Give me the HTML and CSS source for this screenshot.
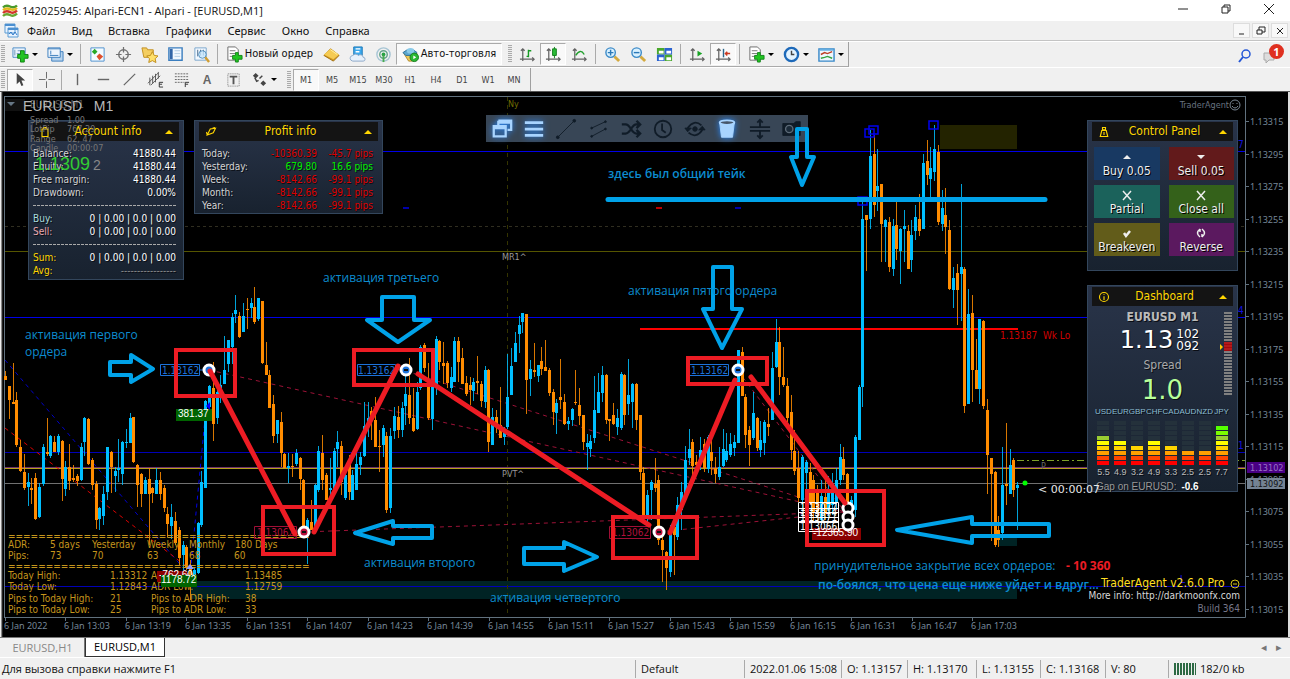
FILE: index.html
```html
<!DOCTYPE html>
<html lang="ru">
<head>
<meta charset="utf-8">
<title>142025945: Alpari-ECN1 - Alpari - [EURUSD,M1]</title>
<link rel="stylesheet" href="styles.css">
</head>
<body>
<svg class="defs" aria-hidden="true">
  <defs>
    <symbol id="logo" viewBox="0 0 16 16"><g fill="none" stroke-width="2.4"><path d="M1 4.500Q4 1.500 8 3.500T15 2.500" stroke="#4a9b2c"/><path d="M1 7.200Q4 4.500 8 6.200T15 5" stroke="#e3b91e"/><path d="M1 10Q4 7 8 9T15 7.500" stroke="#d3372a"/><path d="M1 13Q4 10 8 12T15 10.500" stroke="#69a832"/></g></symbol>
    <symbol id="mdi" viewBox="0 0 16 16"><path d="M2 1h10v9H2zM5 5h10v9H5z" fill="#e8f3ff" stroke="#5b9bd3"/><path d="M2 2h10M5 6h10" stroke="#4b8fd0" stroke-width="2"/><path d="M6 11l2-2 2 3 2-3 2 3" fill="none" stroke="#357cc8"/></symbol>
    <symbol id="newchart" viewBox="0 0 18 18"><path d="M1 2h13v10H1z" fill="#eaf3fc" stroke="#4d8cc8"/><path d="M3 4v6M5 8h6M6 5h5" stroke="#6a96b8"/><path d="M9 9V5h4v4h4v4h-4v4H9v-4H6V9z" fill="#22c422" stroke="#118311"/></symbol>
    <symbol id="profiles" viewBox="0 0 18 18"><path d="M5 6h12v10H5z" fill="#b8d4ee" stroke="#3c7dbd"/><path d="M1 2h13v10H1z" fill="#edf5fd" stroke="#3c7dbd"/><path d="M1 3h13M3 10h9M4 5v4" stroke="#3c7dbd"/></symbol>
    <symbol id="market" viewBox="0 0 18 18"><path d="M2 2h14v14H2z" fill="#f5fbff" stroke="#4d90cf"/><path d="M6 3l3 3-3 3-3-3z" fill="#28a828"/><path d="M11 8l4 3-4 4-3-4z" fill="#df502d"/></symbol>
    <symbol id="target" viewBox="0 0 18 18"><circle cx="9" cy="9" r="5" fill="none" stroke="#707070" stroke-width="1.500"/><path d="M9 1v6M9 11v6M1 9h6M11 9h6" stroke="#707070" stroke-width="1.300"/></symbol>
    <symbol id="folder" viewBox="0 0 18 18"><path d="M1 2h5l1 2h6v8H3z" fill="#f4ce61" stroke="#c18e20"/><path d="M12 6l2 4 4 .5-3 3 .8 4-3.800-2-3.800 2 .8-4-3-3 4-.5z" fill="#ffe06a" stroke="#be8c1d"/></symbol>
    <symbol id="terminal" viewBox="0 0 18 18"><path d="M2 2h14v13H2z" fill="#f2f8ff" stroke="#3b7ebf" stroke-width="1.500"/><path d="M3 3h3v11H3z" fill="#3366a8"/><path d="M8 5h6M8 8h6M8 11h6" stroke="#b2cde6"/></symbol>
    <symbol id="tester" viewBox="0 0 18 18"><path d="M2 2h12v13H2z" fill="#f2f8ff" stroke="#7aa6cc"/><path d="M5 4v7M8 4v6M11 4v6" stroke="#468"/><circle cx="10" cy="9" r="4" fill="#c5e6fc" fill-opacity=".8" stroke="#5590be"/><path d="M13 12l4 5" stroke="#d09d32" stroke-width="2.500"/></symbol>
    <symbol id="order" viewBox="0 0 18 18"><path d="M2 1h8l3 3v11H2z" fill="#fff" stroke="#6b6b6b"/><path d="M4 5h6M4 8h6M4 11h4" stroke="#777"/><path d="M10 10V7h3v3h4v4h-4v3h-3v-3H7v-4z" fill="#20c520" stroke="#14851b"/></symbol>
    <symbol id="gold" viewBox="0 0 18 18"><path d="M1 10l7-7 9 7-6 6z" fill="#d49a20" stroke="#a06d0c"/><path d="M1 9l7-6 9 6-6 5z" fill="#f5cb53"/><path d="M8 4l7 5" stroke="#fff0a4"/></symbol>
    <symbol id="cloud" viewBox="0 0 18 18"><path d="M5 1h9v9H5z" fill="#3ca8ec" stroke="#1877b8"/><path d="M7 3h5M7 6h4" stroke="#fff" stroke-width="1.500"/><path d="M2 15a3 3 0 0 1 2-5 4 4 0 0 1 6 0 3 3 0 0 1 5 2 2 2 0 0 1 0 4H4z" fill="#e6f0fb" stroke="#8ba8c8"/></symbol>
    <symbol id="signal" viewBox="0 0 18 18"><g fill="none"><circle cx="9" cy="9" r="7" stroke="#a7c5d4" stroke-width="1.500"/><circle cx="9" cy="9" r="4" stroke="#64a48b" stroke-width="1.500"/></g><circle cx="9" cy="9" r="2" fill="#27a342"/><path d="M9 10v7" stroke="#4aab52" stroke-width="2"/></symbol>
    <symbol id="auto" viewBox="0 0 18 18"><path d="M2 8h14l-5 8H7z" fill="#edc75a" stroke="#b08a28"/><path d="M1 7q8-7 15 0l-3 3H4z" fill="#5ba6cf" stroke="#2d7199"/><ellipse cx="9" cy="5" rx="4" ry="3" fill="#8acae8"/><circle cx="13" cy="12" r="4.500" fill="#2bb832" stroke="#177b1c"/><path d="M12 10l3 2-3 2z" fill="#fff"/></symbol>
    <symbol id="axis" viewBox="0 0 18 18"><path d="M4 3v13M1 14h15M2 5l2-2 2 2M14 12l2 2-2 2" fill="none" stroke="#626262" stroke-width="1.300"/></symbol>
    <symbol id="bars" viewBox="0 0 18 18"><use href="#axis"/><path d="M10 4v8M10 5h3M8 11h2" stroke="#169a23" stroke-width="1.500"/></symbol>
    <symbol id="candles" viewBox="0 0 18 18"><use href="#axis"/><path d="M10 1v12" stroke="#13801d"/><path d="M8 3h4v7H8z" fill="#2abc36" stroke="#13801d"/></symbol>
    <symbol id="line" viewBox="0 0 18 18"><use href="#axis"/><path d="M5 10q5-8 9-1" fill="none" stroke="#20a02d" stroke-width="1.500"/></symbol>
    <symbol id="scroll" viewBox="0 0 18 18"><use href="#axis"/><path d="M9 5l5 3-5 3z" fill="#17a323"/></symbol>
    <symbol id="shift" viewBox="0 0 18 18"><use href="#axis"/><path d="M9 3v9" stroke="#2b668b" stroke-width="1.500"/><path d="M11 8h5M13 6l-2 2 2 2" fill="none" stroke="#cc3a20" stroke-width="1.500"/></symbol>
    <symbol id="zoomin" viewBox="0 0 18 18"><path d="M11 11l5 5" stroke="#d4aa3f" stroke-width="3"/><circle cx="7" cy="7" r="5" fill="#d9f1ff" stroke="#3d8bc8" stroke-width="1.500"/><path d="M4 7h6M7 4v6" stroke="#2b78b8" stroke-width="1.500"/></symbol>
    <symbol id="zoomout" viewBox="0 0 18 18"><path d="M11 11l5 5" stroke="#d4aa3f" stroke-width="3"/><circle cx="7" cy="7" r="5" fill="#d9f1ff" stroke="#3d8bc8" stroke-width="1.500"/><path d="M4 7h6" stroke="#2b78b8" stroke-width="1.500"/></symbol>
    <symbol id="tile" viewBox="0 0 18 18"><path d="M1 2h8v7H1z M9 9h8v7H9z" fill="#49a82b"/><path d="M9 2h8v7H9z M1 9h8v7H1z" fill="#2b63d0"/><path d="M3 5h5v3H3z M11 5h5v3h-5z M3 12h5v3H3z M11 12h5v3h-5z" fill="#fff"/></symbol>
    <symbol id="clock" viewBox="0 0 18 18"><circle cx="9" cy="9" r="7" fill="#e3f3ff" stroke="#1d69b9" stroke-width="2.500"/><path d="M9 5v4h3" fill="none" stroke="#444" stroke-width="1.500"/></symbol>
    <symbol id="template" viewBox="0 0 18 18"><path d="M1 3h16v13H1z" fill="#eef7fe" stroke="#3888c8" stroke-width="1.500"/><path d="M2 4h14" stroke="#65aee2" stroke-width="2"/><path d="M3 9l4-2 3 1 5-2" fill="none" stroke="#bd4026" stroke-width="1.500"/><path d="M3 13l4-1 3-1 5 2" fill="none" stroke="#35a440" stroke-width="1.500"/></symbol>
    <symbol id="cursor" viewBox="0 0 18 18"><path d="M5 2v12l3-3 2 5 2-1-2-5h4z" fill="#444"/></symbol>
    <symbol id="cross" viewBox="0 0 18 18"><path d="M9 1v7M9 11v7M1 9h7M11 9h7" stroke="#666"/></symbol>
    <symbol id="vline" viewBox="0 0 18 18"><path d="M9 3v12" stroke="#666" stroke-width="1.500"/></symbol>
    <symbol id="hline" viewBox="0 0 18 18"><path d="M3 9h12" stroke="#666" stroke-width="1.500"/></symbol>
    <symbol id="trend" viewBox="0 0 18 18"><path d="M3 15L15 3" stroke="#666" stroke-width="1.300"/></symbol>
    <symbol id="channel" viewBox="0 0 18 18"><path d="M1 13L12 2M4 15L14 5M3 7v8M6 5v8M9 3v9M12 1v7" stroke="#555" fill="none"/><path d="M17 12h-4v5h4M13 14h3" stroke="#333" fill="none"/></symbol>
    <symbol id="fibo" viewBox="0 0 18 18"><path d="M2 3h14M2 6h14M2 9h14M2 12h10" stroke="#666" stroke-dasharray="2 1"/><path d="M17 12h-4v5M13 14h3" stroke="#333" fill="none"/></symbol>
    <symbol id="label" viewBox="0 0 18 18"><path d="M3 3h12v13H3z" fill="none" stroke="#777" stroke-dasharray="1 1"/><path d="M5 6h8M9 6v8" stroke="#555" stroke-width="2"/></symbol>
    <symbol id="arrows" viewBox="0 0 18 18"><path d="M5 2l3 3-3 3-3-3zM13 10l3 3-3 3-3-3z" fill="#444"/><path d="M4 7l2 4 2-1M9 8l3-3" stroke="#444" stroke-width="1.500" fill="none"/></symbol>
  </defs>
</svg>

<div class="app">
  <header class="titlebar">
    <svg class="ico16"><use href="#logo"/></svg>
    <h1 class="caption">142025945: Alpari-ECN1 - Alpari - [EURUSD,M1]</h1>
    <div class="winbtns">
      <button aria-label="Свернуть"><svg viewBox="0 0 12 12"><path d="M1 6h10"/></svg></button>
      <button aria-label="Развернуть"><svg viewBox="0 0 12 12"><path d="M2 4h6v6H2zM4 4V2h6v6H8"/></svg></button>
      <button aria-label="Закрыть"><svg viewBox="0 0 12 12"><path d="M1 1l10 10M11 1L1 11"/></svg></button>
    </div>
  </header>
  <nav class="menubar">
    <svg class="ico16"><use href="#mdi"/></svg>
    <button>Файл</button><button>Вид</button><button>Вставка</button><button>Графики</button><button>Сервис</button><button>Окно</button><button>Справка</button>
    <div class="mdibtns">
      <button aria-label="Свернуть окно"><svg viewBox="0 0 12 12"><path d="M3 9h5"/></svg></button>
      <button aria-label="Восстановить окно"><svg viewBox="0 0 12 12"><path d="M2 5h5v4H2zM4 5V2h6v5H7"/></svg></button>
      <button aria-label="Закрыть окно"><svg viewBox="0 0 12 12"><path d="M3 3l6 6M9 3L3 9"/></svg></button>
    </div>
  </nav>

  <div class="toolrow">
    <div class="toolbar main">
      <i class="grip"></i>
      <button class="drop" aria-label="Новый график"><svg><use href="#newchart"/></svg></button>
      <button class="drop" aria-label="Профили"><svg><use href="#profiles"/></svg></button><i class="sep"></i>
      <button aria-label="Обзор рынка"><svg><use href="#market"/></svg></button>
      <button aria-label="Окно данных"><svg><use href="#target"/></svg></button>
      <button aria-label="Навигатор"><svg><use href="#folder"/></svg></button>
      <button aria-label="Терминал"><svg><use href="#terminal"/></svg></button>
      <button aria-label="Тестер"><svg><use href="#tester"/></svg></button><i class="sep"></i>
      <button class="neworder"><svg><use href="#order"/></svg>Новый ордер</button>
      <button aria-label="Маркет"><svg><use href="#gold"/></svg></button>
      <button aria-label="Облако"><svg><use href="#cloud"/></svg></button>
      <button aria-label="Сигналы"><svg><use href="#signal"/></svg></button>
      <button class="autotrade pressed"><svg><use href="#auto"/></svg>Авто-торговля</button>
      <i class="grip second"></i>
      <button aria-label="Бары"><svg><use href="#bars"/></svg></button>
      <button class="pressed" aria-label="Свечи"><svg><use href="#candles"/></svg></button>
      <button aria-label="Линия"><svg><use href="#line"/></svg></button><i class="sep"></i>
      <button aria-label="Увеличить"><svg><use href="#zoomin"/></svg></button>
      <button aria-label="Уменьшить"><svg><use href="#zoomout"/></svg></button>
      <button aria-label="Окна мозаикой"><svg><use href="#tile"/></svg></button><i class="sep"></i>
      <button aria-label="Автопрокрутка"><svg><use href="#scroll"/></svg></button>
      <button class="pressed" aria-label="Сдвиг графика"><svg><use href="#shift"/></svg></button><i class="sep"></i>
      <button class="drop" aria-label="Индикаторы"><svg><use href="#order"/></svg></button>
      <button class="drop" aria-label="Периоды"><svg><use href="#clock"/></svg></button>
      <button class="drop" aria-label="Шаблоны"><svg><use href="#template"/></svg></button>
    </div>
    <div class="toolright">
      <button aria-label="Поиск"><svg viewBox="0 0 16 16"><circle cx="9" cy="6" r="4" fill="none" stroke="#2456d6" stroke-width="1.500"/><path d="M6 9l-4 5" stroke="#2456d6" stroke-width="2"/></svg></button>
      <button class="bell" aria-label="Сообщения"><svg viewBox="0 0 16 16"><path d="M2 5h10v7H7l-3 3v-3H2z" fill="#ddd" stroke="#aaa"/></svg><span class="badge">1</span></button>
    </div>
  </div>
  <div class="toolrow low">
    <div class="toolbar">
      <i class="grip"></i>
      <button class="pressed" aria-label="Курсор"><svg><use href="#cursor"/></svg></button>
      <button aria-label="Перекрестие"><svg><use href="#cross"/></svg></button><i class="sep"></i>
      <button aria-label="Вертикальная линия"><svg><use href="#vline"/></svg></button>
      <button aria-label="Горизонтальная линия"><svg><use href="#hline"/></svg></button>
      <button aria-label="Трендовая линия"><svg><use href="#trend"/></svg></button>
      <button aria-label="Канал"><svg><use href="#channel"/></svg></button>
      <button aria-label="Фибоначчи"><svg><use href="#fibo"/></svg></button>
      <button class="letter">A</button>
      <button aria-label="Метка"><svg><use href="#label"/></svg></button>
      <button class="drop" aria-label="Стрелки"><svg><use href="#arrows"/></svg></button>
      <i class="grip second"></i>
      <button class="pressed tf">M1</button><button class="tf">M5</button><button class="tf">M15</button><button class="tf">M30</button><button class="tf">H1</button><button class="tf">H4</button><button class="tf">D1</button><button class="tf">W1</button><button class="tf">MN</button>
    </div>
  </div>

  <main class="chart">
    <svg class="plot" viewBox="0 92 1290 545" preserveAspectRatio="xMinYMin meet">
      <path class="frame" d="M4 96.500H1246M4.500 96V617.500M4 617.500H1245.500V96"/>
      <path d="M940 125h77v24h-77z" fill="#232300"/>
      <path d="M190 581h827v18H190zM998 537h19v9h-19z" fill="#002324"/>
      <g class="levels">
        <path d="M5 151.500H1245M5 317.500H1245" stroke="#0000e8"/>
        <path d="M5 452.500H1245M5 586.500H1245" stroke="#0000b8"/>
        <path d="M5 226.500H1245" stroke="#302e20" stroke-dasharray="3 3"/>
        <path d="M507.500 97V617" stroke="#343400" stroke-dasharray="4 4"/>
        <path d="M5 251.500H1245" stroke="#555500"/>
        <path d="M640 329H1018" stroke="#ff0000" stroke-width="2"/>
        <path d="M5 467.500H1245" stroke="#70306c"/>
        <path d="M5 468.500H1245" stroke="#b5a21c"/>
        <path d="M5 483.500H1245" stroke="#707070"/>
        <path d="M1017 460.500H1245" stroke="#80a028" stroke-dasharray="7 3 2 3"/>
        <path d="M5 360L190 576" stroke="#0000c8" stroke-dasharray="4 4"/>
        <path d="M5 428L190 569" stroke="#dc0000" stroke-dasharray="4 4"/>
        <path d="M206 408L190 576" stroke="#0000e8" stroke-dasharray="4 4"/>
        <path d="M209 370L845 512M406 371L845 512M738 371L845 512M304 532L845 512M659 532L845 512" stroke="#9c1237" stroke-dasharray="4 4" fill="none"/>
      </g>
      <path d="M0 0" class="wick up" id="wickUp"/><path d="M0 0" class="wick down" id="wickDown"/>
      <path d="M0 0" class="body up" id="bodyUp"/><path d="M0 0" class="body down" id="bodyDown"/>
      <g fill="none" stroke="#0000f0" stroke-width="1.500"><path d="M865 129h9v8h-9zM869 126h9v8h-9zM929 121h9v8h-9zM858 197h9v8h-9z"/></g>
      <path d="M656 208h6" stroke="#b00" stroke-width="2"/><path d="M735 208h6M403 208h6" stroke="#00a" stroke-width="2"/>
      <circle cx="1025" cy="483" r="2.500" fill="#00ff00"/>
      <g id="prices" class="axistext"></g>
      <g id="times" class="axistext"></g>
      <path d="M1247 462h38v11h-38z" fill="#480084"/><path d="M1247 478h38v11h-38z" fill="#748393"/>
      <text x="1250" y="471" class="tiny" fill="#9a72c4">1.13102</text><text x="1250" y="487" class="tiny" fill="#111">1.13092</text>
      <g class="tiny" fill="#999"><text x="502" y="260">MR1^</text><text x="502" y="477">PVT^</text><text x="1041" y="469" fill="#666">P</text></g>
      <text x="508" y="107" class="tiny" fill="#706c00">Ny</text>
      <text x="1229" y="108" class="agent" text-anchor="end">TraderAgent</text>
      <g fill="none" stroke="#788592"><circle cx="1235" cy="105" r="5"/><path d="M1232 106q3 4 6 0M1233 103v1M1237 103v1"/></g>
      <text x="1000" y="339" class="small" fill="#d00000">1.13187&#160; Wk Lo</text>
      <g class="small" fill="#1010e0"><text x="1238" y="148">7</text><text x="1238" y="314">4</text><text x="1238" y="449">1</text><text x="1180" y="583">L</text></g>
    </svg>

    <section class="panel account">
      <h2><svg viewBox="0 0 16 16"><path d="M4 4h8v10H4zM6 2h4v2H6z"/></svg><span>Account info</span><b></b></h2>
      <dl>
        <dt>Balance:</dt><dd>41880.44</dd><dt>Equity:</dt><dd>41880.44</dd><dt>Free margin:</dt><dd>41880.44</dd><dt>Drawdown:</dt><dd>0.00%</dd>
        <dt class="dash"></dt><dt class="buy">Buy:</dt><dd>0 | 0.00 | 0.0 | 0.00</dd><dt class="sell">Sell:</dt><dd>0 | 0.00 | 0.0 | 0.00</dd>
        <dt class="dash"></dt><dt class="sum">Sum:</dt><dd>0 | 0.00 | 0.0 | 0.00</dd><dt class="sum">Avg:</dt><dd class="dim">-----------------</dd>
      </dl>
    </section>
    <section class="panel profit">
      <h2><svg viewBox="0 0 16 16"><path d="M3 12L7 4l7-1-3 6zM3 12l-1-4M10 3l3-1"/></svg><span>Profit info</span><b></b></h2>
      <table>
        <tr class="neg"><th>Today:</th><td>-10360.39</td><td>-45.7 pips</td></tr>
        <tr class="pos"><th>Yesterday:</th><td>679.80</td><td>16.6 pips</td></tr>
        <tr class="neg"><th>Week:</th><td>-8142.66</td><td>-99.1 pips</td></tr>
        <tr class="neg"><th>Month:</th><td>-8142.66</td><td>-99.1 pips</td></tr>
        <tr class="neg"><th>Year:</th><td>-8142.66</td><td>-99.1 pips</td></tr>
      </table>
    </section>
    <div class="agentbar">
      <button class="lit" aria-label="Окна"><svg viewBox="0 0 24 24"><path d="M8 3h14v10h-4M8 8V3M8 5h14M3 9h13v11H3zM3 11h13" fill="none" stroke-width="2.500"/></svg></button>
      <button class="lit" aria-label="Меню"><svg viewBox="0 0 24 24"><path d="M2 5h20M2 12h20M2 19h20" stroke-width="3"/></svg></button>
      <button aria-label="Линия"><svg viewBox="0 0 24 24"><path d="M3 21L21 3"/><circle cx="3" cy="21" r="1.500"/><circle cx="21" cy="3" r="1.500"/></svg></button>
      <button aria-label="Канал"><svg viewBox="0 0 24 24"><path d="M4 11L19 4M4 20l15-8"/><circle cx="4" cy="11" r="1"/><circle cx="19" cy="4" r="1"/><circle cx="4" cy="20" r="1"/><circle cx="19" cy="12" r="1"/></svg></button>
      <button aria-label="Перемешать"><svg viewBox="0 0 24 24"><path d="M2 7h4q3 0 6 5t6 5h4M2 17h4q3 0 6-5t6-5h4M18 3l4 4-4 4M18 13l4 4-4 4" fill="none" stroke-width="2.500"/></svg></button>
      <button aria-label="Время"><svg viewBox="0 0 24 24"><circle cx="12" cy="12" r="9" fill="none" stroke-width="2"/><path d="M11 6v7l4 3" fill="none" stroke-width="2"/></svg></button>
      <button aria-label="Разворот"><svg viewBox="0 0 24 24"><circle cx="12" cy="12" r="2.500"/><path d="M4 11q7-10 15-3M20 13q-7 10-15 3" stroke-width="2" fill="none"/><path d="M1 11h7l-4 4zM23 13h-7l4-4z"/></svg></button>
      <button class="lit" aria-label="Корзина"><svg viewBox="0 0 24 24"><path d="M4 5l2 16h12l2-16z" class="solid"/><ellipse cx="12" cy="5" rx="8" ry="2.500" fill="#46566a" stroke-width="2"/></svg></button>
      <button aria-label="Уровни"><svg viewBox="0 0 24 24"><path d="M1 10h22M1 14h22M12 2v8M12 14v8M9 5l3-3 3 3M9 19l3 3 3-3" fill="none" stroke-width="2"/></svg></button>
      <button aria-label="Снимок"><svg viewBox="0 0 24 24"><path d="M2 6h12l2-2h5v15H2z" class="solid"/><circle cx="9" cy="12" r="4" fill="#1b2a38" stroke="#5d6b78" stroke-width="1.500"/></svg></button>
    </div>
    <section class="panel control">
      <h2><svg viewBox="0 0 16 16"><path d="M5 6h6l2 8H3zM6 2h4v3H6zM8 8v4"/></svg><span>Control Panel</span><b></b></h2>
      <div class="actions">
        <button class="a1"><svg viewBox="0 0 12 12"><path d="M2 8l4-4 4 4z" class="fill"/></svg>Buy 0.05</button>
        <button class="a2"><svg viewBox="0 0 12 12"><path d="M2 4l4 4 4-4z" class="fill"/></svg>Sell 0.05</button>
        <button class="a3"><svg viewBox="0 0 12 12"><path d="M2 2l8 9M10 2l-8 9"/></svg>Partial</button>
        <button class="a4"><svg viewBox="0 0 12 12"><path d="M2 2l8 9M10 2l-8 9"/></svg>Close all</button>
        <button class="a5"><svg viewBox="0 0 12 12"><path d="M3 6l2 3 4-5" class="thick"/></svg>Breakeven</button>
        <button class="a6"><svg viewBox="0 0 12 12"><path d="M5 2Q0 6 5 10M7 2q5 4 0 8M5 2v3M7 10V7"/></svg>Reverse</button>
      </div>
    </section>
    <section class="panel dash-board">
      <h2><svg viewBox="0 0 16 16"><circle cx="8" cy="8" r="6"/><path d="M8 7v5M8 4v1"/></svg><span>Dashboard</span><b></b></h2>
      <div class="quote">
        <strong>EURUSD M1</strong>
        <div class="price"><span>1.13</span><small>102<br>092</small></div>
        <div class="spread">Spread</div><div class="spreadval">1.0</div>
        <div class="ladder"></div><b class="marker"></b>
      </div>
      <div class="meters" id="meters"></div>
      <p class="gap">Gap on EURUSD: <span>-0.6</span></p>
    </section>

    <svg class="overlay" viewBox="0 92 1290 545" preserveAspectRatio="xMinYMin meet">
      <path d="M5 99h20v12H5z" fill="#111"/><path d="M7 102h8l-4 4z" fill="#667785"/>
      <text x="30" y="108" class="small" fill="#555">EURUSD,M1</text>
      <text x="23" y="111" class="sym">EURUSD&#160;&#160; M1</text>
      <g class="spreadinfo"><text x="30" y="123">Spread</text><text x="67" y="123">1.00</text><text x="30" y="132">LotPip</text><text x="67" y="132">767.29</text><text x="30" y="142">Range</text><text x="67" y="142">62, 47</text><text x="30" y="151">Candle</text><text x="67" y="151">00:00:07</text></g>
      <text x="35" y="170" class="bid">1.1309<tspan class="bidlast" dx="3">2</tspan></text>
      <text x="1038" y="493" class="timer">&lt; 00:00:07</text>
      <g class="pips">
        <text x="8" y="540">========================================</text>
        <text x="8" y="548">ADR:</text><text x="50" y="548">5 days</text><text x="92" y="548">Yesterday</text><text x="147" y="548">Weekly</text><text x="189" y="548">Monthly</text><text x="235" y="548">180 Days</text>
        <text x="8" y="559">Pips:</text><text x="50" y="559">73</text><text x="92" y="559">70</text><text x="147" y="559">63</text><text x="189" y="559">68</text><text x="234" y="559">60</text>
        <text x="8" y="570">========================================</text>
        <text x="8" y="579">Today High:</text><text x="110" y="579">1.13312</text><text x="151" y="579">ADR High:</text><text x="245" y="579">1.13485</text>
        <text x="8" y="590">Today Low:</text><text x="110" y="590">1.12843</text><text x="151" y="590">ADR Low:</text><text x="245" y="590">1.12759</text>
        <text x="8" y="602">Pips to Today High:</text><text x="110" y="602">21</text><text x="151" y="602">Pips to ADR High:</text><text x="245" y="602">38</text>
        <text x="8" y="613">Pips to Today Low:</text><text x="110" y="613">25</text><text x="151" y="613">Pips to ADR Low:</text><text x="245" y="613">33</text>
      </g>
      <path d="M176 409h36v12h-36z" fill="#006400"/><text x="178" y="417" class="tag">381.37</text>
      <path d="M206 406l4-4v8z" fill="#0000ff"/>
      <path d="M157 571h30v11h-30z" fill="#8b0000"/><text x="159" y="578" class="tag">-762.60</text>
      <path d="M161 575h36v12h-36z" fill="#006400"/><text x="161" y="583" class="tag">1178.72</text>
      <path d="M186 569l4-5 4 5z" fill="#8e9cff"/>
      <path d="M812 528h49v12h-49z" fill="#8b0000"/><text x="813" y="536" class="tag">-12365.90</text>
      <g class="entry buyentry"><path d="M160.500 364.500h39v11h-39zM357.500 364.500h38v11h-38zM689.500 364.500h39v11h-39zM200 370h9"/><text x="162" y="374">1.13162</text><text x="358" y="374">1.13162</text><text x="691" y="374">1.13162</text></g>
      <g class="entry sellentry"><path d="M254.500 526.500h42v12h-42zM609.500 526.500h41v12h-41z"/><text x="257" y="536">1.13062</text><text x="612" y="536">1.13062</text></g>
      <g class="entry exit"><path d="M798.500 502.500h40v10h-40zM798.500 508.500h40v9h-40zM798.500 512.500h40v10h-40zM798.500 521.500h40v10h-40z"/><text x="800" y="511">1.13077</text><text x="800" y="516">1.13074</text><text x="800" y="521">1.13071</text><text x="800" y="530">1.13066</text></g>
      <g class="rednote">
        <path d="M176 350h59v46h-59zM354 350h79v35h-79zM688 358h79v26h-79zM263 507h71v47h-71zM613 517h84v41h-84zM807 491h77v54h-77z"/>
      </g>
      <g class="dots"><circle cx="209" cy="370" r="5" fill="#1c72da"/><circle cx="406" cy="370" r="5" fill="#1c72da"/><circle cx="738" cy="370" r="5" fill="#1c72da"/><circle cx="304" cy="532" r="5" fill="#b8103c"/><circle cx="659" cy="532" r="5" fill="#b8103c"/><circle cx="848" cy="508" r="5"/><circle cx="848" cy="517" r="5"/><circle cx="848" cy="525" r="5"/></g>
      <path d="M404 370h4M736 370h4M302 532h4M657 532h4" stroke="#111" stroke-width="2"/>
      <g class="rednote">
        <path class="zig" d="M210 371L295 534M314 532L398 366M418 374L649 525M670 533L735 380M751 377L845 503"/>
      </g>
      <g class="bluenote">
        <path class="arrow" d="M110 362h21v-7l22 14-22 13v-7h-21zM382 297h32v23h16l-32 22-31-22h15zM432 526h-39v-5l-38 12 38 11v-6h39zM524 548h40v-6l33 15-33 14v-7h-40zM713 267h19v42h10l-20 39-19-39h10zM797 129h10v28h7l-12 28-11-28h6zM1049 524h-77v-7l-75 13 75 13v-7h77z"/>
        <path d="M608 199.500H1045" stroke-width="5"/>
      </g>
      <g class="note">
        <text x="25" y="339">активация первого</text><text x="25" y="356">ордера</text>
        <text x="323" y="282">активация третьего</text><text x="628" y="295">активация пятого ордера</text>
        <text x="364" y="567">активация второго</text><text x="490" y="602">активация четвертого</text>
        <text x="608" y="178" class="bold">здесь был общий тейк</text>
        <text x="814" y="570">принудительное закрытие всех ордеров:</text><text x="1066" y="570" class="bold loss">- 10 360</text>
        <text x="818" y="589" class="bold">по-боялся, что цена еще ниже уйдет и вдруг...</text>
      </g>
      <text x="1101" y="587" class="product">TraderAgent v2.6.0 Pro</text><g fill="none" stroke="#d4c21c"><circle cx="1235" cy="584" r="4"/><path d="M1233 584h4"/></g>
      <text x="1240" y="599" class="info" text-anchor="end">More info: http://darkmoonfx.com</text><text x="1240" y="612" class="build" text-anchor="end">Build 364</text>
    </svg>
  </main>

  <nav class="tabs"><button>EURUSD,H1</button><button class="active">EURUSD,M1</button><span class="tabscroll">◂&#160;&#160; ▸</span></nav>
  <footer class="status">
    <span>Для вызова справки нажмите F1</span><span>Default</span><span>2022.01.06 15:08</span><span>O: 1.13157</span><span>H: 1.13170</span><span>L: 1.13155</span><span>C: 1.13168</span><span>V: 80</span><span class="net"><i></i>182/0 kb</span>
  </footer>
</div>
<script src="chart.js"></script>
</body>
</html>
```
FILE: styles.css
```css
* { box-sizing: border-box; }
html, body { height: 100%; margin: 0; }
body { background: #f0f0f0; color: #111; font: 11px/14px "Open Sans", "Noto Sans", sans-serif; overflow: hidden; }
button { border: 0; padding: 0; margin: 0; background: none; color: inherit; font: inherit; }
.defs { position: absolute; width: 0; height: 0; }
.app { display: flex; flex-direction: column; min-height: 100vh; }
.ico16 { width: 16px; height: 16px; }

.titlebar { display: flex; align-items: center; height: 21px; background: #fff; padding-left: 2px; gap: 4px; }
.caption { margin: 0; font-size: 11px; font-weight: 400; flex: 1; }
.winbtns { display: flex; }
.winbtns button { width: 43px; height: 21px; }
.winbtns svg, .mdibtns svg { width: 12px; height: 12px; fill: none; stroke: #222; }

.menubar { display: flex; align-items: center; height: 20px; background: #f0f0f0; padding-left: 3px; border-bottom: 1px solid #c4c4c4; font-family: "Noto Sans", sans-serif; }
.menubar > button { padding: 0 8px; }
.mdibtns { margin-left: auto; display: flex; gap: 2px; padding-right: 2px; }
.mdibtns button { width: 17px; height: 15px; border: 1px solid #ddd; background: #f8f8f8; display: grid; place-items: center; }

.toolrow { display: flex; height: 26px; border-top: 1px solid #fff; justify-content: space-between; }
.toolrow.low { height: 25px; border-bottom: 1px solid #555; }
.toolbar { display: flex; align-items: center; height: 25px; border-right: 1px solid #a0a0a0; border-bottom: 1px solid #aaa; font-family: "DejaVu Sans Condensed", sans-serif; }
.low .toolbar { border-bottom: 0; padding-right: 3px; height: 23px; }
.toolbar button { display: flex; align-items: center; justify-content: center; width: 26px; height: 22px; flex: none; }
.toolbar svg { width: 17px; height: 17px; flex: none; }
.toolbar .drop { width: 35px; gap: 3px; }
.toolbar .drop::after { content: ""; border: 3px solid transparent; border-top-color: #000; border-bottom: 0; }
.toolbar .pressed { background: #f9f9f9; border: 1px solid #aaa; border-right-color: #fff; border-bottom-color: #fff; }
.toolbar .neworder { width: 97px; gap: 2px; }
.toolbar .autotrade { width: 106px; gap: 2px; }
.toolbar .letter { font: bold 12px "Liberation Sans", sans-serif; color: #666; }
.toolbar .tf { font-size: 9px; color: #444; }
.grip { width: 4px; height: 18px; margin: 0 2px 0 1px; background: repeating-linear-gradient(#aaa 0 1px, #eee 1px 2px); flex: none; }
.grip.second { margin-left: 6px; }
.sep { width: 1px; height: 20px; margin: 0 2px; background: #aaa; flex: none; }
.main .sep { margin: 0 3px; }
.toolright { display: flex; gap: 9px; padding: 5px 6px 0 0; }
.toolright svg { width: 16px; height: 16px; }
.bell { position: relative; width: 22px; text-align: left; }
.badge { position: absolute; top: -3px; right: 0; width: 15px; height: 15px; border-radius: 50%; background: #df3020; color: #fff; font-weight: bold; line-height: 15px; text-align: center; }

.chart { position: relative; flex: 1; min-height: 0; background: #000; border-right: 2px solid #ddd; }
.chart::before { content: ""; position: absolute; inset: 0 auto 0 0; width: 3px; background: linear-gradient(90deg, #eee 0 1px, #888 1px 2px, #222 2px); }
.plot, .overlay { display: block; position: absolute; top: 0; left: 0; width: calc(100% + 2px); height: 100%; font-family: "DejaVu Sans Condensed", sans-serif; }
.overlay { pointer-events: none; }
.frame { fill: none; stroke: #61717e; }
.levels { fill: none; stroke-width: 1; }
.up { stroke: #00bfff; }
.down { stroke: #ff8c00; }
.wick { stroke-width: 1; fill: none; opacity: .85; }
.body { stroke-width: 3; fill: none; }
.tiny { font-size: 9px; }
.axistext { font: 9px "Noto Sans", sans-serif; fill: #778899; stroke: none; }
.axistext path { stroke: #61717e; }
.small { font-size: 10px; }
.agent { font-size: 9px; fill: #687380; }

.panel { position: absolute; border: 1px solid #33465c; background: linear-gradient(#293449, #18222f); color: #d5d5d5; font: 11px/13px "DejaVu Sans Condensed", sans-serif; text-shadow: 1px 1px #0a0d14; }
.panel h2 { display: flex; align-items: center; height: 19px; margin: 1px 4px; padding: 0 6px; background: #141414; color: #ffd600; font-size: 12px; font-weight: 400; }
.panel h2 svg { width: 12px; height: 12px; fill: none; stroke: #ffd600; stroke-width: 1.500; }
.panel h2 span { flex: 1; text-align: center; }
.panel h2 b { border: 4px solid transparent; border-bottom-color: #ffd600; border-top: 0; }
.account { left: 28px; top: 28px; width: 156px; height: 160px; }
.account dl { display: grid; grid-template-columns: auto 1fr; margin: 6px 8px 0 4px; font-size: 10px; white-space: nowrap; }
.account dt, .account dd { margin: 0; }
.account dd { text-align: right; color: #fff; }
.account .dash { grid-column: 1 / -1; height: 13px; background: repeating-linear-gradient(90deg, #aaa 0 3px, transparent 3px 4px) 0 6px / 100% 1px no-repeat; }
.account .buy { color: #a9dcdc; }
.account .sell { color: #e9a9b0; }
.account .sum { color: #ffd600; }
.account .dim { color: #888; }
.profit { left: 194px; top: 28px; width: 189px; height: 94px; }
.profit table { width: 171px; margin: 6px 0 0 7px; border-spacing: 0; font-size: 10px; }
.profit th, .profit td { padding: 0; font-weight: 400; text-align: right; }
.profit th { text-align: left; }
.neg td { color: #dd0000; }
.pos td { color: #00ee00; }
.agentbar { position: absolute; left: 486px; top: 23px; display: flex; width: 322px; height: 27px; background: #384656; justify-content: space-around; align-items: center; }
.agentbar button { width: 24px; height: 24px; }
.agentbar svg { width: 22px; height: 22px; stroke: #101c28; fill: #101c28; margin-top: 1px; }
.agentbar .lit svg { stroke: #a8d4ff; filter: drop-shadow(0 0 3px #2a8cff); }
.agentbar .solid { fill: #101c28; }
.agentbar .lit .solid { fill: #a8d4ff; }
.control { right: 50px; top: 28px; width: 151px; height: 151px; }
.actions { display: grid; grid-template-columns: 1fr 1fr; gap: 5px 9px; margin: 6px 3px 0 6px; }
.actions button { display: flex; flex-direction: column; align-items: center; height: 33px; color: #eee; font-size: 12px; line-height: 14px; padding-top: 4px; text-shadow: 1px 1px #000; }
.actions svg { width: 12px; height: 12px; margin-bottom: 1px; fill: none; stroke: #eee; stroke-width: 1.500; }
.actions .fill { fill: #eee; stroke: none; }
.actions .thick { stroke-width: 2.500; }
.a1 { background: #183962; } .a2 { background: #621a1b; } .a3 { background: #1b625b; }
.a4 { background: #34611a; } .a5 { background: #625c1a; } .a6 { background: #5b195f; }
.dash-board { right: 50px; top: 193px; width: 151px; height: 207px; }
.quote { position: relative; text-align: center; height: 98px; margin-top: 3px; }
.quote strong { display: block; color: #bbb; font: bold 12px/16px "DejaVu Sans Condensed", sans-serif; }
.price { display: flex; justify-content: center; align-items: center; height: 29px; color: #fff; gap: 3px; font-family: "DejaVu Sans", sans-serif; padding-right: 6px; }
.price span { font-size: 24px; line-height: 28px; }
.price small { font-size: 12px; line-height: 12px; }
.spread { color: #aaa; font-size: 12px; line-height: 22px; }
.spreadval { color: #b8ff9a; font: 26px/28px "DejaVu Sans", sans-serif; }
.ladder { position: absolute; right: 5px; top: 3px; width: 8px; height: 84px; background: linear-gradient(transparent 36%, #c00000cc 36% 46%, transparent 46%), repeating-linear-gradient(#808080 0 2px, #222c3c 2px 3px); }
.marker { position: absolute; right: 14px; top: 35px; border: 3px solid transparent; border-left-color: #ffc800; border-right: 0; }
.meters { display: grid; grid-template-columns: repeat(8, 1fr); margin: 0 7px; color: #8bbdd2; font: 8px/10px "Liberation Sans", sans-serif; text-align: center; }
.meter { display: flex; flex-direction: column; align-items: center; }
.bar { display: flex; flex-direction: column-reverse; gap: 1px; width: 12px; height: 47px; margin: 1px 0 2px; }
.bar i { height: 4px; background: #24313b; }
.value { color: #bbb; font-size: 9px; }
.gap { margin: 3px 8px; color: #999; font: 10px/13px "Liberation Sans", sans-serif; }
.gap span { color: #fff; font-weight: bold; margin-left: 2px; }

.sym { font: 14px "Liberation Sans", sans-serif; fill: #b8b8b8; }
.spreadinfo { font-size: 9px; fill: #777; }
.bid { font: 18px "Liberation Sans", sans-serif; fill: #32cd32; }
.bidlast { font-size: 14px; fill: #888; }
.timer { font-size: 11px; fill: #e8e8e8; font-family: "DejaVu Sans", sans-serif; }
.pips { font-size: 10px; fill: #c5951c; }
.tag { font: 10px "Liberation Sans", sans-serif; fill: #fff; }
.entry { font-size: 10px; }
.entry path { fill: none; }
.buyentry { fill: #1c72da; stroke: none; }
.buyentry path { stroke: #1c72da; }
.sellentry { fill: #b0103c; }
.sellentry path { stroke: #a00f36; }
.exit { fill: #fff; }
.exit path { stroke: #fff; }
.dots { stroke: #fff; stroke-width: 3; fill: #000; }
.rednote { fill: none; stroke: #ed1c24; stroke-width: 4; }
.zig { stroke-width: 5; stroke-linecap: round; }
.bluenote { fill: none; stroke: #00a2e8; stroke-linecap: round; stroke-linejoin: round; }
.arrow { stroke-width: 4; }
.note { font: 12px "Open Sans", "Noto Sans", sans-serif; fill: #0c8cd0; }
.note .bold { font-weight: 600; }
.note .loss { fill: #ed1c24; font-weight: 700; }
.product { font-size: 12px; fill: #ffdf20; }
.info { font-size: 10px; fill: #d8d8d8; }
.build { font-size: 10px; fill: #778; }

.tabs { display: flex; height: 20px; border-top: 1px solid #777; background: #f0f0f0; }
.tabs button { width: 84px; margin-left: 1px; border-right: 1px solid #777; color: #888; font-size: 11px; }
.tabs button + button { margin: 0; }
.tabs .active { width: 80px; background: #fff; color: #000; border: 1px solid #333; border-top: 0; }
.tabscroll { margin-left: auto; padding-right: 8px; line-height: 18px; color: #777; }
.status { display: grid; grid-template-columns: 1fr 109px 97px 66px 69px 64px 65px 63px 122px; height: 22px; border-top: 1px solid #fff; align-items: center; }
.status span { padding-left: 5px; line-height: 18px; border-left: 1px solid #aaa; white-space: nowrap; }
.status span:first-child { border: 0; padding-left: 2px; }
.net { display: flex; align-items: center; gap: 4px; }
.net i { width: 22px; height: 12px; background: repeating-linear-gradient(90deg, #2d6a44 0 2px, #f0f0f0 2px 3px); }
```
FILE: chart.js
```js
// Each candle: direction (b = rising, o = falling), high, low, body top, body bottom.
const candles = `o371,380,376,380 o386,419,386,400 o363,404,402,404 o392,447,400,445 o440,472,447,471 o454,490,472,488 b473,506,482,487 o478,504,488,490 o473,520,478,519 b483,518,487,517
b444,486,447,484 o418,456,452,454 b435,458,436,456 o436,452,442,452 b434,455,436,452 o440,501,441,479 b461,496,467,489 o444,490,467,481 o465,482,478,480 o474,486,476,481
b443,481,447,480 b417,456,418,442 o418,465,419,464 o458,490,460,485 o481,529,484,520 b507,530,508,519 b486,525,494,516 b447,500,447,492 o451,493,452,467 b467,492,471,476
b439,482,468,470 b441,485,442,474 b429,448,442,443 b413,443,418,443 o417,463,417,462 o464,507,465,485 o473,507,474,494 b477,494,480,494 o468,545,479,494 o487,503,488,493
b468,494,480,494 o472,500,480,494 o485,512,488,508 o507,537,514,524 b504,539,517,526 o512,545,521,543 o527,566,530,558 b541,570,545,555 o545,570,547,568 o560,600,566,578
b568,580,570,578 b522,574,523,573 b471,527,482,525 b400,488,401,488 b385,412,386,407 o362,441,388,424 b383,424,392,418 b375,403,385,390 b336,384,370,384 b340,372,340,364
b313,364,317,347 b295,323,310,314 o312,338,316,337 b303,332,316,332 o298,329,309,310 b298,318,303,308 o287,324,307,322 b298,321,298,319 o301,364,301,363 o342,375,365,375
o370,408,375,408 o395,443,404,436 b420,443,420,434 o412,467,422,453 o453,468,454,468 b453,483,466,468 o454,477,466,467 b449,466,453,464 o457,490,458,479 o479,530,480,528
b518,564,520,535 o500,530,522,530 b484,530,485,528 b446,492,451,490 o435,490,453,480 o473,500,475,500 b458,495,488,490 b448,495,451,490 b431,467,442,449 o441,495,446,482
b467,500,475,498 o455,500,463,492 b470,500,475,500 b450,490,464,490 b452,475,457,465 b402,457,426,456 b402,437,418,426 o407,440,411,420 o397,447,420,447 o430,472,446,447
b425,457,428,445 o432,513,436,510 b428,513,436,508 b407,439,416,431 o406,438,417,430 b402,437,408,430 b376,425,394,406 o358,424,395,418 o388,432,418,431 b382,430,392,429
b345,390,347,388 o343,372,345,368 o363,420,385,418 b385,430,387,419 b336,395,339,384 o340,370,341,362 o342,384,363,366 o361,388,363,383 b367,392,377,388 b337,382,341,382
o337,382,341,362 o348,384,358,384 o376,396,383,394 o377,405,385,390 b378,401,382,391 o356,394,381,383 o381,407,384,401 b366,408,370,402 o369,452,370,442 b408,445,417,445
o410,433,417,424 o387,438,425,438 b427,445,430,437 b354,429,397,427 b348,395,366,395 b332,362,343,362 b316,353,325,334 b313,333,313,322 o314,414,314,380 b360,396,369,379
o343,377,370,372 b365,382,365,376 o347,375,361,369 o340,371,367,371 o368,396,370,393 o389,425,392,412 b399,434,403,413 o359,409,397,400 o394,425,402,424 b417,430,421,424
b408,426,409,420 o370,405,402,403 o388,425,405,416 o415,450,415,442 b434,470,443,447 b435,457,441,449 b376,443,410,438 b373,413,392,413 b366,402,375,393 o374,424,375,420
o419,441,419,421 o403,425,415,424 b409,435,418,427 b372,430,374,428 o374,425,375,415 b359,415,395,404 b383,428,384,402 o383,430,384,420 o415,480,415,472 o467,520,473,515
b490,522,495,518 b480,520,482,490 o458,492,484,488 o475,545,480,540 o537,582,540,550 o551,590,552,568 b525,577,534,572 o520,575,527,535 b497,540,505,537 b482,530,492,510
b446,500,460,497 b429,465,449,458 o439,480,442,466 o455,470,462,465 b437,470,450,463 o439,472,444,468 b435,473,437,469 o440,475,452,461 o457,483,468,474 b447,480,467,477
b429,467,449,466 b433,462,451,460 b433,457,444,455 b435,456,442,448 b350,443,350,443 o347,396,352,396 o394,448,397,435 o426,466,430,445 b392,440,413,438 o417,451,418,448
b421,457,440,450 b420,455,422,443 o408,436,424,427 b352,420,368,420 b319,368,342,367 o327,395,342,377 o347,387,377,385 o378,422,386,418 o395,460,412,450 o430,475,451,471
o451,502,468,498 b455,508,457,500 b460,495,462,473 o463,505,472,502 o475,522,480,512 o485,522,490,514 b480,525,496,520 o478,520,497,514 b476,520,492,510 b473,515,490,505
b468,510,480,502 b444,485,457,480 o447,480,459,475 o473,520,474,505 b496,535,500,520 b435,517,437,510 b385,440,387,440 b200,407,219,387 o215,271,215,220 b130,229,156,219
o135,217,154,205 b149,211,186,191 o184,262,184,224 b219,262,220,227 o217,272,222,267 b219,276,226,269 o200,260,225,249 b228,284,229,251 b210,262,226,229 o225,269,231,269
b220,272,235,260 b205,240,217,231 o194,236,219,231 b154,229,163,229 o140,185,161,175 b147,197,168,179 b125,181,149,172 o145,225,152,222 b190,231,208,224 o188,254,215,227
o220,290,230,289 b267,308,278,290 o264,325,273,290 b184,321,267,274 o267,413,269,406 b289,404,314,404 o295,402,313,370 o339,389,370,389 b319,404,319,389 o320,409,321,406
o399,494,410,455 o458,541,458,474 o471,547,472,545 o516,547,530,540 b447,540,485,533 o423,505,484,486 b449,494,465,494 o458,497,460,490 b482,530,485,488`.split(/\s+/);

const paths = { b: ["", ""], o: ["", ""] };
candles.forEach((c, i) => {
  const [high, low, top, bottom] = c.slice(1).split(",");
  const x = Math.round(5 + i * 3.777) + 0.5;
  paths[c[0]][0] += `M${x} ${high}V${low}`;
  paths[c[0]][1] += `M${x} ${top}V${bottom}`;
});
document.getElementById("wickUp").setAttribute("d", paths.b[0]);
document.getElementById("bodyUp").setAttribute("d", paths.b[1]);
document.getElementById("wickDown").setAttribute("d", paths.o[0]);
document.getElementById("bodyDown").setAttribute("d", paths.o[1]);

let prices = "";
for (let k = 0; k < 16; k++) {
  const y = Math.round(121 + k * 32.5);
  prices += `<path d="M1245 ${y}.5h4"/><text x="1250" y="${y + 4}">${(1.13315 - k * 0.0002).toFixed(5)}</text>`;
}
document.getElementById("prices").innerHTML = prices;

const times = ["2022", "13:03", "13:19", "13:35", "13:51", "14:07", "14:23", "14:39", "14:55", "15:11", "15:27", "15:43", "15:59", "16:15", "16:31", "16:47", "17:03"];
document.getElementById("times").innerHTML = times.map((t, k) => {
  const x = Math.round(4 + k * 60.44);
  return `<path d="M${x + 1}.5 617v4"/><text x="${x}" y="629">6 Jan ${t}</text>`;
}).join("");

const colors = ["#ff0000", "#ff4500", "#ffa000", "#ffd400", "#ffff00", "#9acd32", "#7cfc00", "#55ff00"];
const strengths = [["USD", "5.5", 6], ["EUR", "4.9", 5], ["GBP", "3.2", 4], ["CHF", "4.9", 5], ["CAD", "3.3", 4], ["AUD", "2.5", 3], ["NZD", "2.5", 3], ["JPY", "7.7", 8]];
document.getElementById("meters").innerHTML = strengths.map(([name, value, n]) => {
  let cells = "";
  for (let k = 0; k < 9; k++) cells += k < n ? `<i style="background:${colors[k]}"></i>` : "<i></i>";
  return `<div class="meter">${name}<div class="bar">${cells}</div><span class="value">${value}</span></div>`;
}).join("");
```
